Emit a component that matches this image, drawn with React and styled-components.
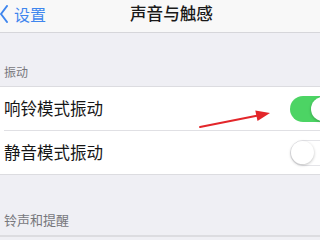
import React from "react";
import styled, { createGlobalStyle } from "styled-components";

const Global = createGlobalStyle`
  html, body { margin: 0; padding: 0; }
  body {
    width: 320px;
    height: 240px;
    overflow: hidden;
    background: #efeff4;
    font-family: "Noto Sans CJK SC", "Noto Sans", sans-serif;
  }
`;

const Page = styled.div`
  position: relative;
  width: 320px;
  height: 240px;
  overflow: hidden;
  background: #efeff4;
`;

const NavBar = styled.div`
  height: 33px;
  box-sizing: border-box;
  background: #f8f8f8;
  border-bottom: 1px solid #d6d6da;
  display: flex;
  align-items: center;
`;

const Back = styled.div`
  display: flex;
  align-items: center;
  gap: 6px;
  color: #3f86ee;
  font-size: 16px;
  line-height: 1;
  width: 46px;
  margin-top: -5px;
`;

const Title = styled.div`
  margin-left: 84px;
  margin-top: -5px;
  font-size: 16.6px;
  font-weight: 500;
  color: #1a1a1a;
  line-height: 1;
`;

const SectionHeader = styled.div`
  height: ${(p) => p.$h}px;
  box-sizing: border-box;
  display: flex;
  align-items: flex-end;
  padding: 0 0 ${(p) => p.$pb}px 4px;
  font-size: ${(p) => p.$fs}px;
  color: #77777c;
  line-height: 1;
`;

const Group = styled.div`
  background: #fff;
  border-top: 1px solid #dcdce0;
  border-bottom: 1px solid #dcdce0;
`;

const Row = styled.div`
  height: ${(p) => p.$h}px;
  box-sizing: border-box;
  display: flex;
  align-items: center;
  justify-content: space-between;
  margin-left: 4px;
  border-bottom: ${(p) => (p.$sep ? "1px solid #e0e0e4" : "none")};
`;

const Label = styled.div`
  font-size: 16.5px;
  color: #161616;
  line-height: 1;
  margin-top: -1px;
`;

const Toggle = styled.div`
  position: relative;
  width: 46px;
  height: 26px;
  box-sizing: border-box;
  border-radius: 13px;
  margin-right: -16px;
  flex-shrink: 0;
  background: ${(p) => (p.$on ? "#4cd464" : "#fff")};
  border: ${(p) => (p.$on ? "none" : "1.5px solid #e4e4e8")};
  &::after {
    content: "";
    position: absolute;
    top: ${(p) => (p.$on ? "1px" : "0px")};
    ${(p) => (p.$on ? "right: 1px;" : "left: 0px;")}
    width: 24px;
    height: 24px;
    ${(p) => (p.$on ? "" : "width: 23px; height: 23px;")}
    border-radius: 50%;
    background: #fff;
    box-shadow: 0 1px 3px rgba(0, 0, 0, 0.25);
  }
`;

const ArrowLayer = styled.svg`
  position: absolute;
  left: 0;
  top: 0;
  pointer-events: none;
`;

export default function App() {
  return (
    <Page>
      <Global />
      <NavBar>
        <Back>
          <svg width="8" height="18" viewBox="0 0 8 18">
            <path d="M7 1 L1 9 L7 17" fill="none" stroke="#3f86ee" strokeWidth="2" strokeLinecap="round" strokeLinejoin="round" />
          </svg>
          <span>设置</span>
        </Back>
        <Title>声音与触感</Title>
      </NavBar>
      <SectionHeader $h={53} $pb={8} $fs={12}>振动</SectionHeader>
      <Group>
        <Row $h={44} $sep>
          <Label>响铃模式振动</Label>
          <Toggle $on />
        </Row>
        <Row $h={43}>
          <Label>静音模式振动</Label>
          <Toggle />
        </Row>
      </Group>
      <SectionHeader $h={60} $pb={9} $fs={13}>铃声和提醒</SectionHeader>
      <Group />
      <ArrowLayer width="320" height="240">
        <line x1="200" y1="127" x2="258" y2="115.5" stroke="#e3262a" strokeWidth="2" strokeLinecap="round" />
        <polygon points="270,113 255.3,110.6 257.5,121" fill="#e3262a" />
      </ArrowLayer>
    </Page>
  );
}
